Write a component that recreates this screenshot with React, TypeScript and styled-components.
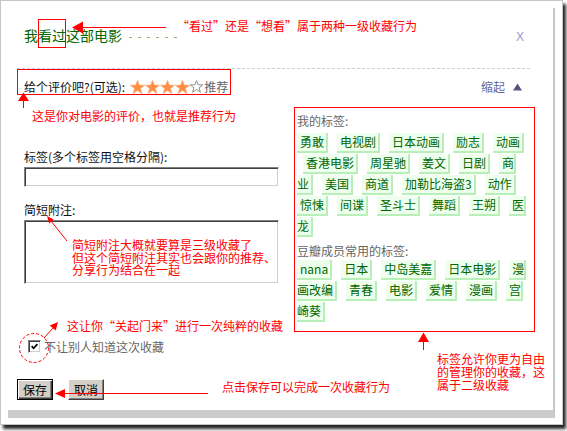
import React from 'react';
import styled, { createGlobalStyle } from 'styled-components';

const CJK = `"Noto Sans CJK SC", "Noto Sans CJK JP", sans-serif`;

const GlobalStyle = createGlobalStyle`
  html, body { margin: 0; padding: 0; background: #fff; }
  body { font-family: ${CJK}; font-size: 12px; }
  *, *::before, *::after { box-sizing: border-box; }
`;

const Frame = styled.div`
  position: relative;
  width: 567px;
  height: 431px;
  overflow: hidden;
  background: #fff;
  font-family: ${CJK};
  font-size: 12px;
`;

const Window = styled.div`
  width: 563px;
  height: 425px;
  border: 1px solid #c6c6c6;
  background: #fff;
  box-shadow: 3px 4px 3px rgba(0, 0, 0, 0.85);
  padding: 7px 0 0 7px;
`;

const Pane = styled.div`
  width: 547px;
  height: 410px;
  border-right: 2px solid #c8c8c8;
  border-bottom: 8px solid #cccccc;
  padding: 20px 18px 0 9px;
  display: flex;
  flex-direction: column;
`;

const Header = styled.div`
  display: flex;
  align-items: flex-start;
  height: 15px;
  padding: 0 11px 0 7px;
`;

const Title = styled.h1`
  margin: 0;
  font-size: 14px;
  line-height: 15px;
  font-weight: normal;
  color: #006600;
`;

const TitleRule = styled.span`
  width: 48px;
  height: 1px;
  margin: 9px 0 0 7px;
  background: repeating-linear-gradient(90deg, #aaa56a 0 3px, transparent 3px 9px);
`;

const Close = styled.span`
  margin-left: auto;
  margin-top: 2px;
  font-family: "Liberation Sans", Arial, sans-serif;
  font-size: 12px;
  line-height: 15px;
  color: #9999cc;
`;

const Divider = styled.div`
  margin: 25px 5px 0 0;
  border-top: 1px dashed #d0d0d0;
`;

const Body = styled.div`
  display: flex;
  align-items: flex-start;
`;

const FormCol = styled.div`
  width: 277px;
  flex: none;
  display: flex;
  flex-direction: column;
  align-items: flex-start;
`;

const SideCol = styled.div`
  flex: 1;
  display: flex;
  flex-direction: column;
`;

const RatingRow = styled.div`
  margin-top: 11px;
  padding-left: 7px;
  display: flex;
  align-items: center;
  height: 13px;
  line-height: 13px;
  color: #111;
`;

const Stars = styled.span`
  display: flex;
  align-items: center;
  margin-left: 5px;
`;

const Recommend = styled.span`
  margin-left: 1px;
  color: #666;
`;

const FieldLabel = styled.label<{ $top: number }>`
  margin: ${p => p.$top}px 0 0 7px;
  line-height: 13px;
  color: #111;
`;

const TextInput = styled.input`
  margin: 4px 0 0 7px;
  width: 255px;
  height: 20px;
  padding: 0 3px;
  background: #fff;
  border: 1px solid;
  border-color: #808080 #fff #fff #808080;
  box-shadow: inset 1px 1px #404040, inset -1px -1px #d4d0c8;
  outline: none;
  font-family: ${CJK};
  font-size: 12px;
`;

const NoteArea = styled.textarea`
  margin: 4px 0 0 7px;
  width: 255px;
  height: 64px;
  padding: 2px 3px;
  resize: none;
  background: #fff;
  border: 1px solid;
  border-color: #808080 #fff #fff #808080;
  box-shadow: inset 1px 1px #404040, inset -1px -1px #d4d0c8;
  outline: none;
  font-family: ${CJK};
  font-size: 12px;
`;

const CheckRow = styled.label`
  margin: 56px 0 0 11px;
  display: flex;
  align-items: center;
  gap: 3px;
  height: 13px;
  line-height: 13px;
  color: #666;
`;

const CheckBox = styled.span`
  width: 13px;
  height: 13px;
  flex: none;
  background: #fff;
  border: 1px solid;
  border-color: #808080 #fff #fff #808080;
  box-shadow: inset 1px 1px #404040, inset -1px -1px #d4d0c8;
  display: flex;
  align-items: center;
  justify-content: center;
`;

const ButtonRow = styled.div`
  margin-top: 26px;
  display: flex;
  gap: 15px;
`;

const Button = styled.button<{ $primary?: boolean }>`
  width: 36px;
  height: 21px;
  padding: 0;
  margin: 0;
  font-family: ${CJK};
  font-size: 12px;
  line-height: 17px;
  color: #000;
  background: #d4d0c8;
  border: 1px solid;
  border-color: ${p => (p.$primary ? '#000' : '#fff #404040 #404040 #fff')};
  box-shadow: ${p =>
    p.$primary
      ? 'inset 1px 1px #fff, inset -1px -1px #404040, inset -2px -2px #808080'
      : 'inset -1px -1px #808080'};
`;

const CollapseRow = styled.div`
  margin-top: 11px;
  display: flex;
  justify-content: flex-end;
  align-items: center;
  gap: 8px;
  padding-right: 13px;
  height: 13px;
  line-height: 13px;
  color: #666699;
`;

const TagPanel = styled.div`
  margin-top: 14px;
  border: 1px solid #ff0000;
  padding: 6px 1px 9px 2px;
`;

const PanelLabel = styled.div<{ $top?: number }>`
  margin-top: ${p => p.$top ?? 0}px;
  line-height: 13px;
  color: #666;
`;

const TagCloud = styled.div<{ $top: number }>`
  margin-top: ${p => p.$top}px;
  display: flex;
  flex-direction: column;
  gap: 1px;
`;

const TagLine = styled.div<{ $lead?: number }>`
  display: flex;
  gap: 9px;
  padding-left: ${p => p.$lead ?? 0}px;
`;

const Tag = styled.span<{ $part?: 'head' | 'tail' }>`
  display: block;
  padding: 0 ${p => (p.$part === 'head' ? 0 : 2)}px 0 ${p => (p.$part === 'tail' ? 0 : 3)}px;
  line-height: 18px;
  background: #eeffee;
  color: #006600;
  border-right: 2px solid #b8eeb8;
  border-bottom: 2px solid #b8eeb8;
  white-space: nowrap;
`;

const Callout = styled.div<{ $x: number; $y: number; $lh?: number }>`
  position: absolute;
  left: ${p => p.$x}px;
  top: ${p => p.$y}px;
  color: #ff0000;
  font-family: ${CJK};
  font-size: 12px;
  line-height: ${p => p.$lh ?? 13}px;
  white-space: nowrap;
`;

const Overlay = styled.svg`
  position: absolute;
  left: 0;
  top: 0;
  pointer-events: none;
`;

const STAR = '7.5,0.2 9.4,5.1 14.7,5.2 10.5,8.5 12,13.7 7.5,10.6 3,13.7 4.5,8.5 0.3,5.2 5.6,5.1';

const FilledStar = () => (
  <svg width="15" height="14" viewBox="0 0 15 14">
    <polygon points={STAR} fill="#ff8f45" stroke="#ffb47a" strokeWidth="0.6" strokeLinejoin="round" />
  </svg>
);

const HollowStar = () => (
  <svg width="13" height="13" viewBox="0 0 15 14">
    <polygon points={STAR} fill="none" stroke="#8a8a8a" strokeWidth="1.1" strokeLinejoin="round" />
  </svg>
);

type T = { t: string; part?: 'head' | 'tail' };
const myTags: { lead?: number; tags: T[] }[] = [
  { tags: [{ t: '勇敢' }, { t: '电视剧' }, { t: '日本动画' }, { t: '励志' }, { t: '动画' }] },
  { lead: 6, tags: [{ t: '香港电影' }, { t: '周星驰' }, { t: '姜文' }, { t: '日剧' }, { t: '商', part: 'head' }] },
  { tags: [{ t: '业', part: 'tail' }, { t: '美国' }, { t: '商道' }, { t: '加勒比海盗3' }, { t: '动作' }] },
  { tags: [{ t: '惊悚' }, { t: '间谍' }, { t: '圣斗士' }, { t: '舞蹈' }, { t: '王朔' }, { t: '医', part: 'head' }] },
  { tags: [{ t: '龙', part: 'tail' }] },
];
const commonTags: { lead?: number; tags: T[] }[] = [
  { tags: [{ t: 'nana' }, { t: '日本' }, { t: '中岛美嘉' }, { t: '日本电影' }, { t: '漫', part: 'head' }] },
  { tags: [{ t: '画改编', part: 'tail' }, { t: '青春' }, { t: '电影' }, { t: '爱情' }, { t: '漫画' }, { t: '宫', part: 'head' }] },
  { tags: [{ t: '崎葵', part: 'tail' }] },
];

const Cloud = ({ rows, top }: { rows: { lead?: number; tags: T[] }[]; top: number }) => (
  <TagCloud $top={top}>
    {rows.map((r, i) => (
      <TagLine key={i} $lead={r.lead}>
        {r.tags.map((tg, j) => (
          <Tag key={j} $part={tg.part}>{tg.t}</Tag>
        ))}
      </TagLine>
    ))}
  </TagCloud>
);

const Annotations = () => (
  <>
    <Overlay width="567" height="431" viewBox="0 0 567 431">
      <g stroke="#ff0000" fill="none" strokeWidth="1">
        <rect x="38.5" y="19.5" width="27" height="28" />
        <rect x="17.5" y="69.5" width="213" height="25" />
        <line x1="82" y1="27.5" x2="166" y2="27.5" />
        <line x1="23.5" y1="100" x2="23.5" y2="108" />
        <line x1="67" y1="241" x2="51" y2="221" />
        <circle cx="34" cy="348" r="14.5" strokeDasharray="3 2" />
        <line x1="44" y1="338" x2="53" y2="328" />
        <line x1="64" y1="393.5" x2="208" y2="393.5" />
        <line x1="423.5" y1="341" x2="423.5" y2="350" />
      </g>
      <g fill="#ff0000">
        <polygon points="72,27.5 83,21.5 83,33.5" />
        <polygon points="23.5,92.5 18,101 29,101" />
        <polygon points="47,216 53.7,219.6 49.1,223.4" />
        <polygon points="58,322 55.7,330.6 49.7,325.4" />
        <polygon points="55,393.5 65,389 65,398" />
        <polygon points="423.5,332.5 418,342 429,342" />
      </g>
    </Overlay>
    <Callout $x={177} $y={19}>“看过”还是“想看”属于两种一级收藏行为</Callout>
    <Callout $x={32} $y={109}>这是你对电影的评价，也就是推荐行为</Callout>
    <Callout $x={72} $y={239} $lh={12.5}>
      简短附注大概就要算是三级收藏了
      <br />
      但这个简短附注其实也会跟你的推荐、
      <br />
      分享行为结合在一起
    </Callout>
    <Callout $x={67} $y={319}>这让你“关起门来”进行一次纯粹的收藏</Callout>
    <Callout $x={222} $y={380}>点击保存可以完成一次收藏行为</Callout>
    <Callout $x={437} $y={352}>
      标签允许你更为自由
      <br />
      的管理你的收藏，这
      <br />
      属于二级收藏
    </Callout>
  </>
);

export default function App() {
  return (
    <Frame>
      <GlobalStyle />
      <Window>
        <Pane>
          <Header>
            <Title>我看过这部电影</Title>
            <TitleRule />
            <Close>X</Close>
          </Header>
          <Divider />
          <Body>
            <FormCol>
              <RatingRow>
                给个评价吧?(可选):
                <Stars>
                  <FilledStar />
                  <FilledStar />
                  <FilledStar />
                  <FilledStar />
                  <HollowStar />
                </Stars>
                <Recommend>推荐</Recommend>
              </RatingRow>
              <FieldLabel $top={57}>标签(多个标签用空格分隔):</FieldLabel>
              <TextInput type="text" />
              <FieldLabel $top={16}>简短附注:</FieldLabel>
              <NoteArea />
              <CheckRow>
                <CheckBox>
                  <svg width="7" height="7" viewBox="0 0 7 7">
                    <path d="M0.6 3.2 L2.6 5.3 L6.4 1.2" stroke="#000" strokeWidth="1.7" fill="none" />
                  </svg>
                </CheckBox>
                不让别人知道这次收藏
              </CheckRow>
              <ButtonRow>
                <Button $primary>保存</Button>
                <Button>取消</Button>
              </ButtonRow>
            </FormCol>
            <SideCol>
              <CollapseRow>
                缩起
                <svg width="9" height="8" viewBox="0 0 9 8">
                  <polygon points="4.5,0.5 9,7.5 0,7.5" fill="#55557a" />
                </svg>
              </CollapseRow>
              <TagPanel>
                <PanelLabel>我的标签:</PanelLabel>
                <Cloud rows={myTags} top={6} />
                <PanelLabel $top={7}>豆瓣成员常用的标签:</PanelLabel>
                <Cloud rows={commonTags} top={3} />
              </TagPanel>
            </SideCol>
          </Body>
        </Pane>
      </Window>
      <Annotations />
    </Frame>
  );
}
